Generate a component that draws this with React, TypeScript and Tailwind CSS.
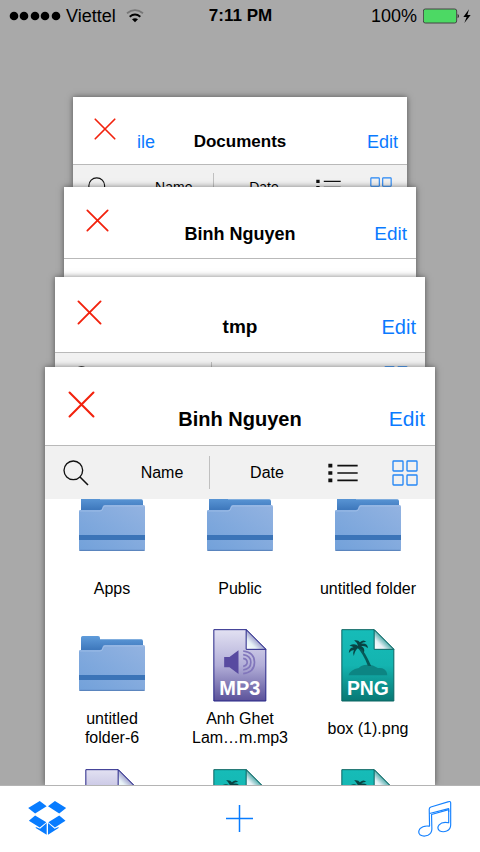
import React from "react";

type CardStyle = {
  frame: string;
  header: string;
  title: string;
  edit: string;
  close: string;
  toolbar: string;
  icon: string;
  list: string;
};

const cardStyles: Record<"back" | "third" | "second" | "front", CardStyle> = {
  back: {
    frame: "mx-[73px] h-[90px] shrink-0",
    header: "h-[68px] pb-[10px]",
    title: "text-[17px]",
    edit: "text-[18px] pr-[9px]",
    close: "size-[22px] mt-[21px] ml-[21px]",
    toolbar: "h-[45px] text-[14px]",
    icon: "size-[22px]",
    list: "h-[17px] w-[25px]",
  },
  third: {
    frame: "mx-[64px] h-[90px] shrink-0",
    header: "h-[72px] pb-[12px]",
    title: "text-[18px]",
    edit: "text-[19px] pr-[9px]",
    close: "size-[23px] mt-[22px] ml-[22px]",
    toolbar: "h-[47px] text-[14px]",
    icon: "size-[23px]",
    list: "h-[18px] w-[27px]",
  },
  second: {
    frame: "mx-[55px] h-[90px] shrink-0",
    header: "h-[76px] pb-[13px]",
    title: "text-[19px]",
    edit: "text-[20px] pr-[9px]",
    close: "size-[25px] mt-[23px] ml-[22px]",
    toolbar: "h-[50px] text-[15px]",
    icon: "size-[24px]",
    list: "h-[19px] w-[28px]",
  },
  front: {
    frame: "mx-[45px] min-h-0 flex-1",
    header: "h-[79px] pb-[14px]",
    title: "text-[20px]",
    edit: "text-[21px] pr-[10px]",
    close: "size-[27px] mt-[24px] ml-[23px]",
    toolbar: "h-[53px] text-[16px]",
    icon: "size-[26px]",
    list: "h-[20px] w-[30px]",
  },
};

function StatusBar() {
  return (
    <div className="grid h-8 shrink-0 grid-cols-3 items-center pl-[9px] pr-2 text-[18px] text-black">
      <div className="flex items-center">
        <svg viewBox="0 0 52 10" className="h-[10px] w-[52px]" aria-hidden="true">
          {[5, 15, 26, 36, 47].map((x) => (
            <circle key={x} cx={x} cy="5" r="4.3" />
          ))}
        </svg>
        <span className="ml-[5px]">Viettel</span>
        <svg viewBox="0 0 54 42" className="ml-[10px] h-[14px] w-[18px]" fill="none" strokeWidth="5.5" aria-hidden="true">
          <path d="M3 13Q27-6 51 13" stroke="#777" />
          <path d="M11 23Q27 10 43 23" stroke="#000" />
          <path d="M18 31Q27 24 36 31L27 40Z" fill="#000" />
        </svg>
      </div>
      <div className="text-center text-[17px] font-bold">7:11 PM</div>
      <div className="flex items-center justify-end">
        <span>100%</span>
        <svg viewBox="0 0 147 48" className="ml-[6px] h-[16px] w-[49px]" aria-hidden="true">
          <rect x="1" y="3" width="100" height="42" rx="6" fill="#4cd964" stroke="#454545" strokeWidth="3" />
          <path d="M104 17q7 7 0 14Z" fill="#111" />
          <path d="M138 4 121 27h10l-7 18 19-24h-10Z" fill="#000" />
        </svg>
      </div>
    </div>
  );
}

function Toolbar({ look }: { look: CardStyle }) {
  return (
    <div className={`grid shrink-0 grid-cols-[61fr_104fr_102fr_62fr_61fr] items-center bg-[#f1f1f1] ${look.toolbar}`}>
      <button aria-label="Search" className="flex justify-center">
        <svg viewBox="0 0 78 78" className={look.icon} fill="none" stroke="#111" aria-hidden="true">
          <circle cx="31" cy="31" r="28" strokeWidth="4" />
          <path d="m51 51 24 24" strokeWidth="5" />
        </svg>
      </button>
      <button className="h-[64%] border-r border-[#c0c0c0] pl-[9px]">Name</button>
      <button className="pl-[12px]">Date</button>
      <button aria-label="List view" className="flex justify-center">
        <svg viewBox="0 0 90 60" className={look.list} stroke="#111" aria-hidden="true">
          <path d="M1 8h12M1 30h12M1 52h12" strokeWidth="11" />
          <path d="M28 8h61M28 30h61M28 52h61" strokeWidth="5" />
        </svg>
      </button>
      <button aria-label="Grid view" className="flex justify-center">
        <svg viewBox="0 0 78 78" className={look.icon} fill="none" stroke="#2586f5" strokeWidth="4" aria-hidden="true">
          {[3, 45].map((x) =>
            [3, 45].map((y) => <rect key={`${x}-${y}`} x={x} y={y} width="30" height="30" rx="2" />)
          )}
        </svg>
      </button>
    </div>
  );
}

function Card({
  look,
  title,
  back,
  toolbar = true,
  children,
}: {
  look: CardStyle;
  title: string;
  back?: string;
  toolbar?: boolean;
  children?: React.ReactNode;
}) {
  return (
    <section className={`relative flex flex-col overflow-hidden bg-white shadow-[0_0_6px_rgba(0,0,0,0.5)] ${look.frame}`}>
      <header className={`grid shrink-0 grid-cols-[1fr_auto_1fr] items-end border-b border-[#b9b9b9] leading-6 ${look.header}`}>
        <div className="flex items-end self-stretch">
          <button aria-label={`Close ${title}`} className={`self-start ${look.close}`}>
            <svg viewBox="0 0 26 26" className="size-full" stroke="#f2220d" strokeWidth="2" strokeLinecap="round" aria-hidden="true">
              <path d="m1.5 1.5 23 23M24.5 1.5l-23 23" />
            </svg>
          </button>
          {back && <button className="ml-[21px] text-[18px] text-[#0a7aff]">{back}</button>}
        </div>
        <h2 className={`font-bold ${look.title}`}>{title}</h2>
        <button className={`justify-self-end text-[#0a7aff] ${look.edit}`}>Edit</button>
      </header>
      {toolbar && <Toolbar look={look} />}
      {children}
    </section>
  );
}

function FolderIcon() {
  return (
    <svg viewBox="117 438 198 165" className="mt-[8px] h-[55px] w-[66px]" aria-hidden="true">
      <defs>
        <linearGradient id="folderBack" x1="0" y1="0" x2="0" y2="1">
          <stop offset="0" stopColor="#5f9cdb" />
          <stop offset="0.6" stopColor="#3f79bd" />
        </linearGradient>
        <linearGradient id="folderFront" x1="1" y1="0" x2="0" y2="1">
          <stop offset="0" stopColor="#93b3e1" />
          <stop offset="1" stopColor="#72a1da" />
        </linearGradient>
      </defs>
      <path d="M123 443q0-5 5-5h46q6 0 6 6v4h124q5 0 5 6v50H123Z" fill="url(#folderBack)" />
      <path d="M117 484q0-4 5-4h58q6 0 7-7 1-8 7-8h116q5 0 5 5v128q0 5-5 5H122q-5 0-5-5Z" fill="url(#folderFront)" />
      <path d="M118 483h62q8 0 9-9 1-6 6-6h118" stroke="#a8c4ec" strokeWidth="2" fill="none" />
      <path d="M117 555h198v15H117Z" fill="#3b74b8" />
      <path d="M118 601h196" stroke="#557fb8" strokeWidth="3" />
    </svg>
  );
}

function Page({ id, from, mid, to, edge, shade, children }: {
  id: string;
  from: string;
  mid: string;
  to: string;
  edge: string;
  shade: string;
  children: React.ReactNode;
}) {
  return (
    <svg viewBox="71 55 161 219" className="mt-px h-[73px] w-[54px]" aria-hidden="true">
      <defs>
        <linearGradient id={id} x1="0" y1="0" x2="0" y2="1">
          <stop offset="0" stopColor={from} />
          <stop offset="0.5" stopColor={mid} />
          <stop offset="1" stopColor={to} />
        </linearGradient>
        <linearGradient id={`${id}Fold`} x1="0" y1="1" x2="0.6" y2="0.4">
          <stop offset="0" stopColor="#ffffff" />
          <stop offset="0.45" stopColor="#e6f1f6" />
          <stop offset="1" stopColor={shade} />
        </linearGradient>
      </defs>
      <path d="M73 57h97l59 59v155H73Z" fill={`url(#${id})`} stroke={edge} strokeWidth="3" />
      {children}
      <path d="M170 57v59h59Z" fill={`url(#${id}Fold)`} stroke={edge} strokeWidth="3" />
    </svg>
  );
}

function Mp3Icon() {
  return (
    <Page id="mp3Page" from="#e2e1f2" mid="#b2aed8" to="#5a5199" edge="#252487" shade="#8583bd">
      <path d="M104 139h16l27-20v71l-27-20h-16Z" fill="#584aa0" />
      <g fill="none" stroke="#8176bb" strokeWidth="5">
        <path d="M161 143q12 2 12 12t-12 12" />
        <path d="M161 132q23 3 23 23t-23 23" />
        <path d="M161 121q34 4 34 34t-34 34" />
      </g>
      <text x="151" y="254" textAnchor="middle" fontSize="60" fontWeight="bold" fill="#fff">MP3</text>
    </Page>
  );
}

function PngIcon() {
  return (
    <Page id="pngPage" from="#16bcb8" mid="#14b4b0" to="#087874" edge="#0b6563" shade="#1f9490">
      <path d="M93 194q5-17 31-22 6-9 25-10 16-1 32 10 24-2 28 17v5Z" fill="#0c8583" />
      <path d="M124 105q19 18 37 61l-10-1q-13-34-32-55Z" fill="#075a59" />
      <path d="M122 106q-11-10-26-1 7 0 12 5-14 2-14 17 7-9 15-9-4 8 0 18 3-17 12-23 13 1 18 14 5-15-8-20 11-3 20 6 1-16-20-14 5-6 15-5-7-10-19 1-4-8-17-6 9 7 12 17Z" fill="#084544" />
      <text x="151" y="254" textAnchor="middle" fontSize="58" fontWeight="bold" fill="#fff">PNG</text>
    </Page>
  );
}

const icons = { folder: FolderIcon, mp3: Mp3Icon, png: PngIcon };

const files: { kind: keyof typeof icons; lines: string[] }[] = [
  { kind: "folder", lines: ["Apps"] },
  { kind: "folder", lines: ["Public"] },
  { kind: "folder", lines: ["untitled folder"] },
  { kind: "folder", lines: ["untitled", "folder-6"] },
  { kind: "mp3", lines: ["Anh Ghet", "Lam…m.mp3"] },
  { kind: "png", lines: ["box (1).png"] },
  { kind: "mp3", lines: [] },
  { kind: "png", lines: [] },
  { kind: "png", lines: [] },
];

function FileGrid() {
  return (
    <div className="min-h-0 flex-1 overflow-hidden px-[3px]">
      <ul className="-mt-[11px] grid grid-cols-3">
        {files.map((file, i) => {
          const Icon = icons[file.kind];
          return (
            <li key={i} className="flex h-[140px] flex-col items-center">
              <div className="h-[73px]">
                <Icon />
              </div>
              <p className="flex h-[54px] flex-col justify-center text-center text-[16px] leading-[19px] whitespace-nowrap">
                {file.lines.map((line) => (
                  <span key={line}>{line}</span>
                ))}
              </p>
            </li>
          );
        })}
      </ul>
    </div>
  );
}

function TabBar() {
  return (
    <nav className="relative grid h-[67px] shrink-0 grid-cols-3 items-center border-t border-[#b4b4b4] bg-white px-7 pb-[2px]">
      <button aria-label="Dropbox" className="justify-self-start">
        <svg viewBox="82 153 117 103" className="h-[34px] w-[39px]" fill="#087cff" aria-hidden="true">
          <path d="m82 174 35-21 21 16-35 22ZM142 169l21-16 34 21-21 17ZM84 213l19-16 34 20-20 16ZM143 217l33-20 19 16-32 20ZM105 232l13 5 20-17v35l-33-20ZM142 220l20 17 12-5v3l-32 20Z" />
        </svg>
      </button>
      <button aria-label="Add" className="justify-self-center">
        <svg viewBox="0 0 27 27" className="size-[27px]" stroke="#087cff" strokeWidth="1.5" aria-hidden="true">
          <path d="M13.5 0v27M0 13.5h27" />
        </svg>
      </button>
      <button aria-label="Music" className="justify-self-end">
        <svg viewBox="531 958 103 112" className="h-[37px] w-[34px]" fill="none" stroke="#1682ff" strokeWidth="3.5" strokeLinejoin="round" aria-hidden="true">
          <path d="M566 1037 565 986q0-5 5-7l54-16q6-2 6 4v67q0 13-12 18-12 5-22-1-9-8-1-18 9-10 29-6v-40l-52 15 1 44q0 13-12 19-13 5-23-1-9-8-1-19 9-10 27-8Z" />
          <path d="m566 999 58-15v10" />
        </svg>
      </button>
    </nav>
  );
}

export default function App() {
  return (
    <main className="flex h-screen flex-col overflow-hidden bg-[#a9a9a9] font-['Liberation_Sans',Arial,sans-serif] text-black">
      <StatusBar />
      <div className="flex min-h-0 flex-1 flex-col pt-[65px]">
        <Card look={cardStyles.back} title="Documents" back="ile" />
        <Card look={cardStyles.third} title="Binh Nguyen" toolbar={false} />
        <Card look={cardStyles.second} title="tmp" />
        <Card look={cardStyles.front} title="Binh Nguyen">
          <FileGrid />
        </Card>
      </div>
      <TabBar />
    </main>
  );
}
